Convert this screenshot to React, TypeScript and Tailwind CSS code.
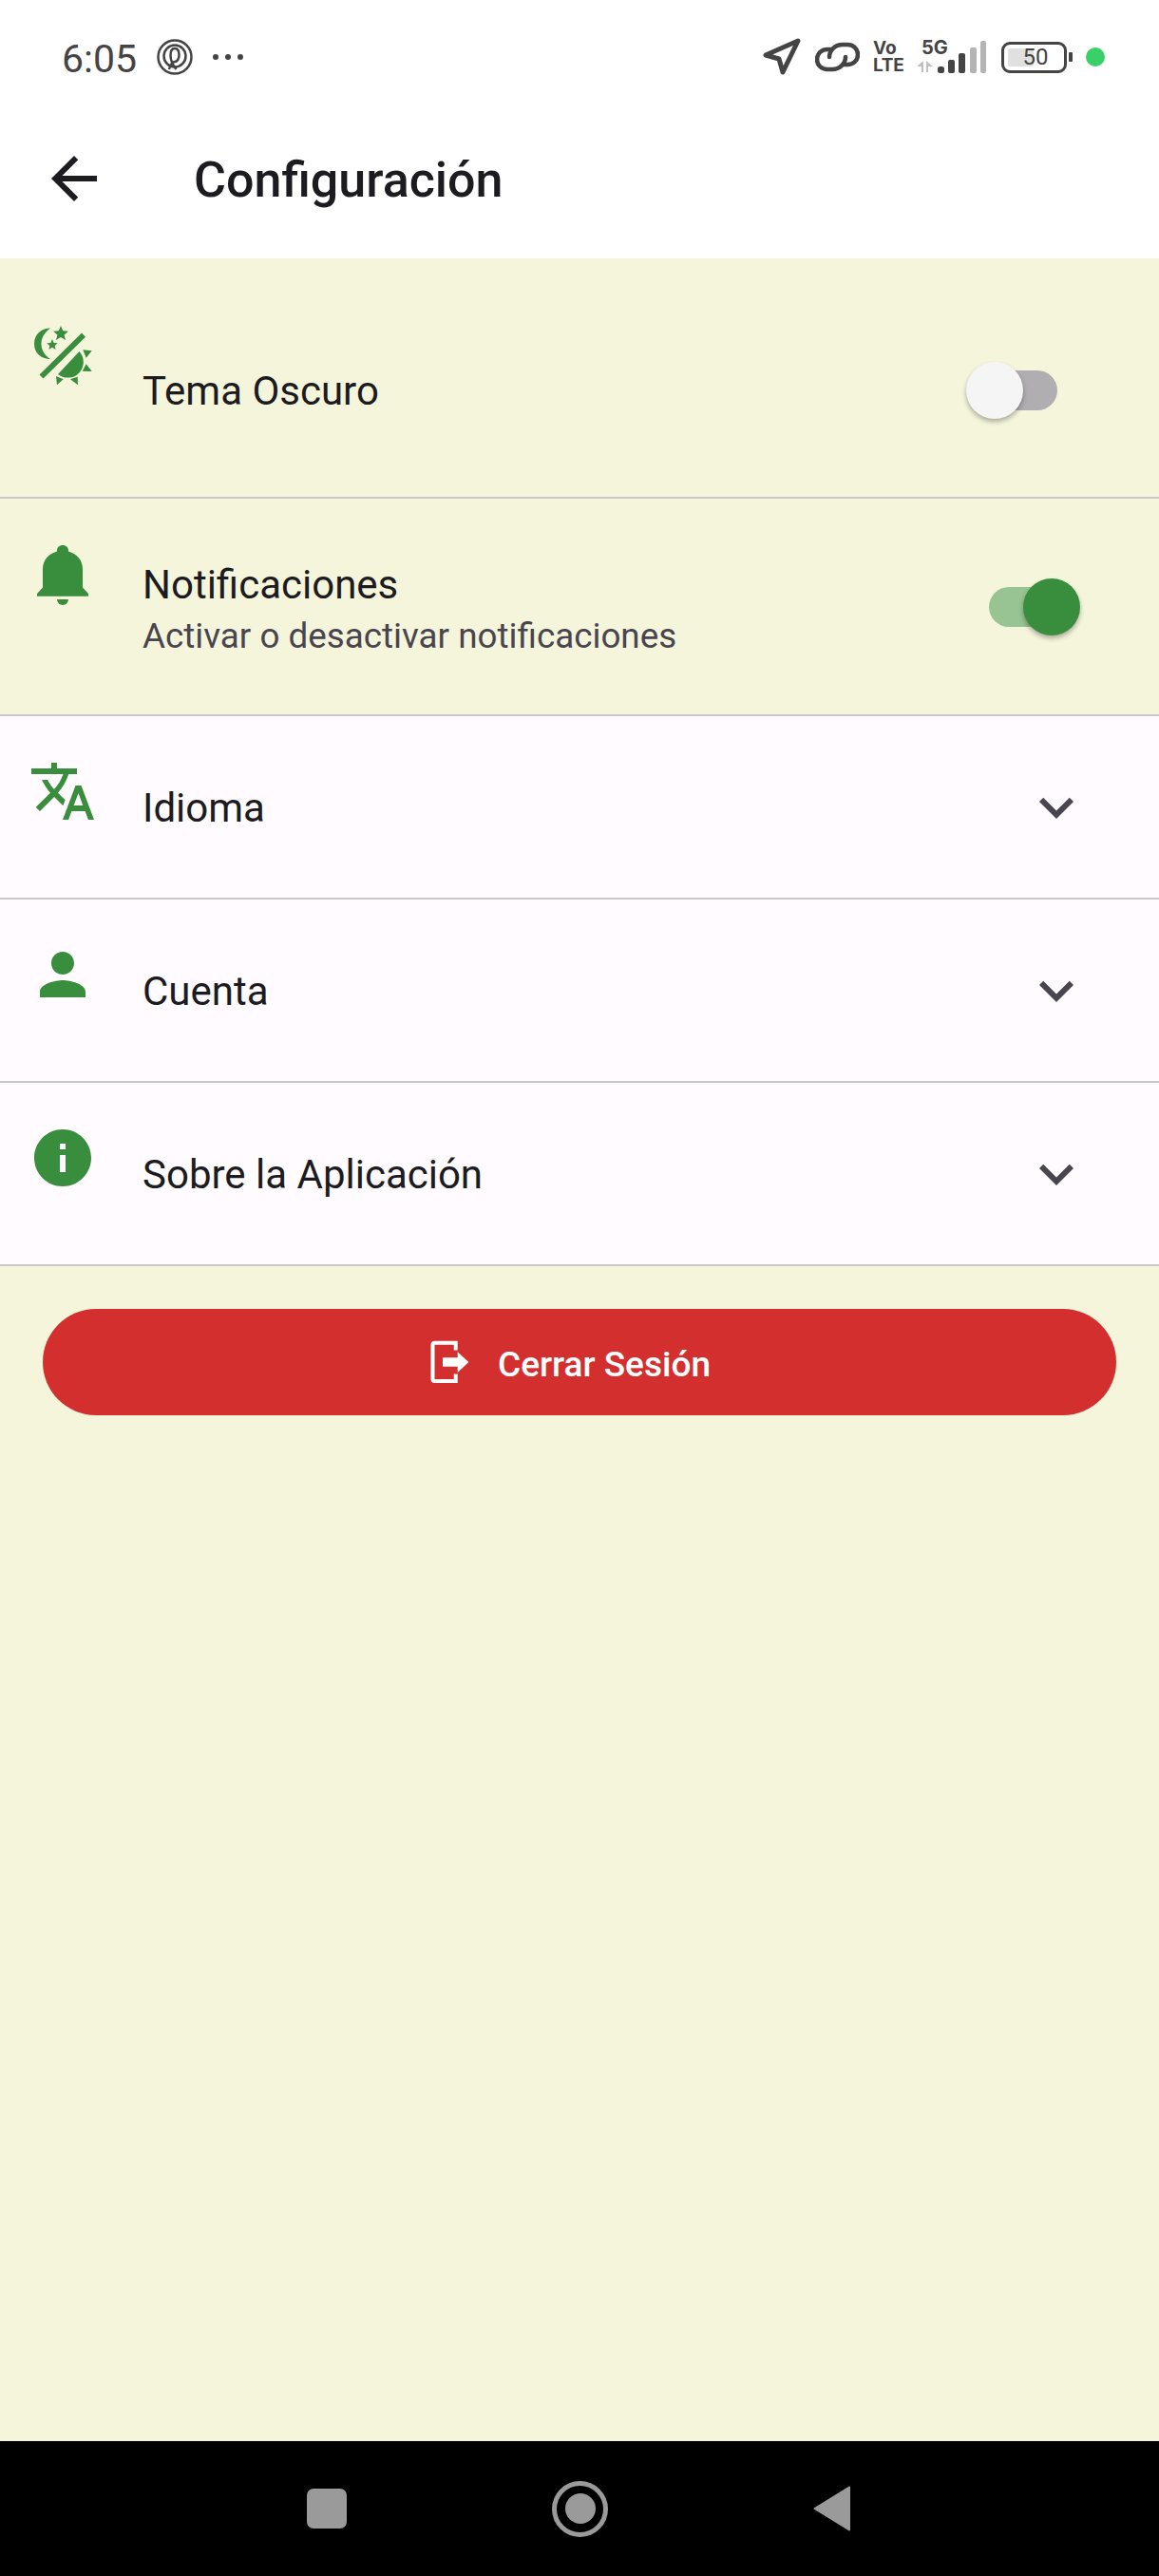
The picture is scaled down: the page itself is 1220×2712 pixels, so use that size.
import { ReactNode } from "react";

const GREEN = "#388e3c";

function ThemeIcon() {
  return (
    <svg width="72" height="72" viewBox="-4 -4 72 72" fill={GREEN}>
      <path d="M19 3.500C9 3.500 2 10.500 2 20s7 16 17 16C13 32 9.500 26.500 9.500 20S13 8 19 3.500z" />
      <path d="M30 1l2.200 5.300 5.800.4-4.400 3.700 1.400 5.600-5-3-5 3 1.400-5.600L22 6.700l5.800-.4z" />
      <path d="M21 15l1.600 3.900 4.200.3-3.200 2.700 1 4.100-3.600-2.200-3.600 2.200 1-4.100-3.200-2.700 4.200-.3z" />
      <path d="M7.500 52.500L52 8.500l4 4.200L11.500 56.500z" />
      <path d="M27 52L49.500 28A16.500 16.500 0 0 1 27 52z" />
      <path d="M53.300 26.300l9.400 1-6 7.400zM56.700 41.300l6 7.700-10-.3zM40 57.300l7.700-2.600.3 8.600zM25 54l7.700 3.300-6.700 6z" />
    </svg>
  );
}

function BellIcon() {
  return (
    <svg width="72" height="72" viewBox="0 0 72 72" fill={GREEN}>
      <path d="M36 6c-3.600 0-6 2.400-6 5.500v1C21 15 15 22 15 31v19.500L9 57v2.700h54V57l-6-6.500V31c0-9-6-16-15-18.500v-1C42 8.400 39.600 6 36 6z" />
      <path d="M30 63h12a6 6 0 0 1-12 0z" />
    </svg>
  );
}

function MaterialIcon({ d, color = GREEN }: { d: string; color?: string }) {
  return (
    <svg width="72" height="72" viewBox="0 0 24 24" fill={color}>
      <path d={d} />
    </svg>
  );
}

const translatePath =
  "M12.87 15.07l-2.54-2.51.03-.03c1.74-1.94 2.98-4.17 3.71-6.53H17V4h-7V2H8v2H1v1.99h11.17C11.5 7.92 10.44 9.75 9 11.35 8.07 10.32 7.3 9.19 6.69 8h-2c.73 1.63 1.73 3.17 2.98 4.56l-5.09 5.02L4 19l5-5 3.11 3.11.76-2.04zM18.5 10h-2L12 22h2l1.12-3h4.75L21 22h2l-4.5-12zm-2.62 7l1.62-4.33L19.12 17h-3.240z";
const personPath =
  "M12 12c2.210 0 4-1.790 4-4s-1.790-4-4-4-4 1.790-4 4 1.790 4 4 4zm0 2c-2.670 0-8 1.340-8 4v2h16v-2c0-2.660-5.330-4-8-4z";
const infoPath =
  "M12 2C6.480 2 2 6.480 2 12s4.480 10 10 10 10-4.480 10-10S17.520 2 12 2zm1 15h-2v-6h2v6zm0-8h-2V7h2v2z";
const chevronPath = "M16.590 8.590L12 13.170 7.410 8.590 6 10l6 6 6-6z";
const backPath = "M20 11H7.830l5.590-5.590L12 4l-8 8 8 8 1.410-1.410L7.830 13H20v-2z";

function Toggle({ on }: { on: boolean }) {
  return (
    <div className={`relative w-[72px] h-[42px] rounded-full ${on ? "bg-[#97c492]" : "bg-[#b0aeb0]"}`}>
      <div
        className={`absolute top-[-9px] w-[60px] h-[60px] rounded-full shadow-[0_3px_5px_rgba(0,0,0,0.3)] ${
          on ? "right-[-24px] bg-[#388e3c]" : "left-[-24px] bg-[#f5f5f5]"
        }`}
      />
    </div>
  );
}

function Row({
  icon,
  title,
  subtitle,
  trailing,
  className,
  iconClass = "mt-[43px]",
}: {
  icon: ReactNode;
  title: string;
  subtitle?: string;
  trailing: ReactNode;
  className: string;
  iconClass?: string;
}) {
  return (
    <div className={`flex items-start pl-[30px] border-b-2 border-[#cac7ca] ${className}`}>
      <div className={iconClass}>{icon}</div>
      <div className={`ml-[48px] flex-1 self-center ${subtitle ? "mt-[8px]" : "mt-[3px]"}`}>
        <div className="text-[42px] leading-[54px] text-[#1c1b1f]">{title}</div>
        {subtitle && <div className="text-[36.8px] leading-[54px] text-[#49454f]">{subtitle}</div>}
      </div>
      {trailing}
    </div>
  );
}

function Chevron() {
  return (
    <div className="self-center mr-[72px]">
      <MaterialIcon d={chevronPath} color="#49454f" />
    </div>
  );
}

function StatusBar() {
  return (
    <div className="h-[120px] flex items-center pl-[65px] pr-[57px] text-[#444444]">
      <span className="text-[41px] leading-none mt-[4px]">6:05</span>
      <svg className="ml-[21px]" width="38" height="40" viewBox="0 0 38 40" fill="none" stroke="#444444" strokeWidth="2.500">
        <circle cx="19" cy="20" r="17.500" />
        <circle cx="19" cy="19" r="11.500" />
        <path d="M19 11c-3 0-4.500 3-4.500 7 0 5 2 10 6 15M19 11c3 0 4.500 3 4.500 7 0 4-2 7-4.500 7-2.500 0-4.500 3-6 8" />
      </svg>
      <div className="ml-[21px] flex gap-[7px]">
        <div className="w-[6px] h-[6px] rounded-full bg-[#444444]" />
        <div className="w-[6px] h-[6px] rounded-full bg-[#444444]" />
        <div className="w-[6px] h-[6px] rounded-full bg-[#444444]" />
      </div>

      <div className="ml-auto flex items-center">
        <svg width="40" height="40" viewBox="0 0 40 40" fill="none" stroke="#444444" strokeWidth="5" strokeLinejoin="round">
          <path d="M3 18L37 3 21 36 17 22z" />
        </svg>
        <svg className="ml-[15px]" width="47" height="34" viewBox="0 0 47 34" fill="none" stroke="#444444" strokeWidth="4.500" strokeLinecap="round">
          <path d="M15 17c0-7 6-13 14-13h5c6 0 11 4 11 10.500S40 25 34 25h-4" />
          <path d="M32 17c0 7-6 13-14 13h-5C7 30 2 26 2 19.500S7 9 13 9h4" />
        </svg>
        <div className="ml-[14px] w-[34px] font-['Inter',sans-serif] font-bold text-[19px] leading-[18px]">
          <div>Vo</div>
          <div className="tracking-[-0.2px]">LTE</div>
        </div>
        <div className="relative ml-[12px] w-[73px] h-[34px]">
          <span className="absolute left-[5px] top-[-2px] font-['Inter',sans-serif] font-bold text-[20px] leading-[18px]">5G</span>
          <svg className="absolute left-0 top-0" width="73" height="34" viewBox="0 0 73 34">
            <path d="M0 27l7-6v12H5v-6zM10 21l7 6h-5v6h-2z" fill="#c0c0c0" />
            <rect x="22" y="27" width="7" height="7" rx="2.500" fill="#444444" />
            <rect x="33" y="20" width="7" height="14" rx="2" fill="#444444" />
            <rect x="44" y="13" width="7" height="21" rx="2" fill="#444444" />
            <rect x="56" y="7" width="7" height="27" rx="2" fill="#b4b4b4" />
            <rect x="67" y="0" width="6" height="34" rx="2" fill="#b4b4b4" />
          </svg>
        </div>
        <div className="relative ml-[16px] w-[69px] h-[33px] rounded-[9px] border-[3px] border-[#444444] flex items-center justify-center">
          <div className="absolute left-[4px] top-[4px] w-[27px] h-[19px] rounded-[2px] bg-[#e0e0e0]" />
          <span className="relative text-[24px] leading-none text-[#444444] ml-[3px]">50</span>
        </div>
        <div className="ml-[2px] w-[4px] h-[10px] rounded-[1px] bg-[#444444]" />
        <div className="ml-[14px] w-[20px] h-[20px] rounded-full bg-[#3ad068]" />
      </div>
    </div>
  );
}

function NavBar() {
  return (
    <div className="h-[142px] bg-black flex items-center pl-[323px] gap-[216px]">
      <div className="w-[42px] h-[42px] rounded-[7px] bg-[#9a9a9a]" />
      <div className="w-[59px] h-[59px] rounded-full border-[5px] border-[#9a9a9a] flex items-center justify-center">
        <div className="w-[32px] h-[32px] rounded-full bg-[#9a9a9a]" />
      </div>
      <svg width="40" height="48" viewBox="0 0 40 48" fill="#9a9a9a" stroke="#9a9a9a" strokeWidth="2" strokeLinejoin="round">
        <path d="M38 1.500V46.500L1.500 24z" />
      </svg>
    </div>
  );
}

export default function App() {
  return (
    <div className="h-[2712px] flex flex-col bg-[#f5f5dc] font-['Roboto',sans-serif]">
      <div className="bg-white h-[272px]">
        <StatusBar />
        <div className="h-[136px] flex items-center pl-[42px]">
          <MaterialIcon d={backPath} color="#1c1b1f" />
          <h1 className="ml-[90px] text-[52px] leading-none font-medium text-[#1c1b1f] mt-[4px]">Configuración</h1>
        </div>
      </div>

      <div className="flex-1">
        <Row
          className="h-[253px] pt-[26px]"
          iconClass="mt-[40px]"
          icon={<ThemeIcon />}
          title="Tema Oscuro"
          trailing={
            <div className="self-center mr-[107px]">
              <Toggle on={false} />
            </div>
          }
        />
        <Row
          className="h-[229px]"
          icon={<BellIcon />}
          title="Notificaciones"
          subtitle="Activar o desactivar notificaciones"
          trailing={
            <div className="self-center mr-[107px]">
              <Toggle on />
            </div>
          }
        />
        <div className="bg-[#fffbfe]">
          <Row className="h-[193px]" icon={<MaterialIcon d={translatePath} />} title="Idioma" trailing={<Chevron />} />
          <Row className="h-[193px]" icon={<MaterialIcon d={personPath} />} title="Cuenta" trailing={<Chevron />} />
          <Row className="h-[193px]" icon={<MaterialIcon d={infoPath} />} title="Sobre la Aplicación" trailing={<Chevron />} />
        </div>

        <button className="mt-[45px] mx-[45px] w-[1130px] h-[112px] rounded-full bg-[#d32f2f] flex items-center justify-center gap-[28px] pr-[22px] text-white">
          <svg width="46" height="48" viewBox="0 0 46 48" fill="none">
            <path d="M29.700 11.500V3.700H7.500a2 2 0 0 0-2 2V42a2 2 0 0 0 2 2h22.200v-7.500" stroke="white" strokeWidth="4" />
            <path d="M16 19.300h15.700v-6L43.300 24 31.700 35v-6.300H16z" fill="white" />
          </svg>
          <span className="text-[37px] leading-none font-medium mt-[4px]">Cerrar Sesión</span>
        </button>
      </div>

      <NavBar />
    </div>
  );
}
